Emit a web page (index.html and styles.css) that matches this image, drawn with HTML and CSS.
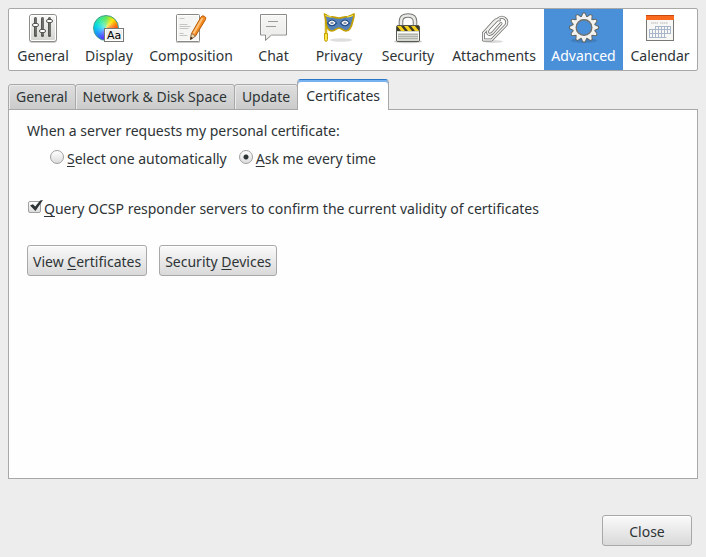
FILE: index.html
```html
<!DOCTYPE html>
<html lang="en">
<head>
    <meta charset="UTF-8">
    <meta name="viewport" content="width=device-width, initial-scale=1.0">
    <title>Preferences</title>
    <link rel="stylesheet" href="styles.css">
</head>
<body>
    <nav class="toolbar">
        <button type="button" class="category">
            <svg class="icon" viewBox="0 0 32 32" aria-hidden="true">
                <defs>
                    <linearGradient id="plate" x1="0" y1="0" x2="0" y2="1">
                        <stop offset="0" stop-color="#fafaf9"/>
                        <stop offset="1" stop-color="#d3d3d0"/>
                    </linearGradient>
                </defs>
                <rect x="2" y="3" width="28" height="28" rx="3" fill="#000" opacity=".2"/>
                <rect x="2.5" y="2.5" width="27" height="27" rx="2.5" fill="url(#plate)" stroke="#8b8d88"/>
                <rect x="3.5" y="3.5" width="25" height="25" rx="1.5" fill="none" stroke="#fff"/>
                <path d="M8.500 6.500v17M15.500 6.500v17M22.500 6.500v17" stroke="#555753" stroke-width="3" stroke-linecap="round"/>
                <path d="M9 6v17M16 6v17M23 6v17" stroke="#888a85" stroke-width="1"/>
                <rect x="5.500" y="11.500" width="6" height="3" rx="1.500" fill="#fff" stroke="#555753"/>
                <rect x="12.500" y="17.500" width="6" height="3" rx="1.500" fill="#fff" stroke="#555753"/>
                <rect x="19.500" y="7.500" width="6" height="3" rx="1.500" fill="#fff" stroke="#555753"/>
            </svg>
            <span>General</span>
        </button>
        <button type="button" class="category">
            <svg class="icon" viewBox="0 0 32 32" aria-hidden="true">
                <foreignObject x="0" y="3" width="26" height="26"><div class="color-wheel"></div></foreignObject>
                <rect x="11.500" y="16.500" width="19" height="13" fill="#eeeeec" stroke="#777975"/>
                <rect x="12.500" y="17.500" width="17" height="11" fill="none" stroke="#fff"/>
                <text class="icon-sample" x="14" y="27">Aa</text>
            </svg>
            <span>Display</span>
        </button>
        <button type="button" class="category">
            <svg class="icon" viewBox="0 0 32 32" aria-hidden="true">
                <rect x="1" y="3" width="24" height="28" rx="1" fill="#000" opacity=".2"/>
                <rect x="1.500" y="2.500" width="23" height="27" rx="1" fill="#f5f5f4" stroke="#888a85"/>
                <rect x="2.500" y="3.500" width="21" height="25" fill="none" stroke="#fff"/>
                <path d="M4.500 6.500h5M4.500 12.500h8M4.500 14.500h11M4.500 16.500h9M4.500 21.500h4M4.500 23.500h8" stroke="#c4c6c1"/>
                <path d="M15.500 27.500l1-6 9.500-16.500q1.500-2 3.500-.7t1 3.200L20.500 24z" fill="#f58a1f" stroke="#b75a05"/>
                <path d="M18.500 21.500L27.500 6" stroke="#fcc27a" stroke-width="2"/>
                <path d="M15.500 27.500l1-6 4 2.500z" fill="#f2dcae" stroke="#77604a" stroke-width=".7"/>
                <path d="M15.300 27.700l.5-3 2 1.300z" fill="#222"/>
            </svg>
            <span>Composition</span>
        </button>
        <button type="button" class="category">
            <svg class="icon" viewBox="0 0 32 32" aria-hidden="true">
                <path d="M2.500 2.500h26v20.500H13.500L7.500 28.500V23H2.500z" fill="url(#plate)" stroke="#8b8d88"/>
                <path d="M3.500 3.500h24v18.500H13L8.500 26V22h-5z" fill="#f6f6f5" stroke="#fff" opacity=".65"/>
                <path d="M10 9.500h10M8 14.500h10" stroke="#999b96"/>
            </svg>
            <span>Chat</span>
        </button>
        <button type="button" class="category">
            <svg class="icon" viewBox="0 0 32 32" aria-hidden="true">
                <ellipse cx="18" cy="28" rx="11" ry="1.800" fill="#000" opacity=".13"/>
                <path d="M3 2v20" stroke="#b89600" stroke-width="2.400"/>
                <path d="M3 2v20" stroke="#f5dc3c"/>
                <path d="M1.500 21.500h3v6q-.5 2-1.500 2t-1.500-2z" fill="#fce94f" stroke="#c4a000"/>
                <path d="M1.500 2q2 2 5 2.500c4 0 6.500 1.500 9.500 1.500s5-1.500 9-1.500q3-.5 6-2.500c.3 2-.4 4.500-1.200 7-1.200 5.500-3 10-6.800 10-3 0-4.500-3-7-3s-4 3-7 3c-4 0-6-5-6-9.500-.2-2.500-1-5-1.500-7.500z" fill="#5481b8" stroke="#c4a000" stroke-width="1.700" stroke-linejoin="round"/>
                <path d="M2.500 3.500q3 1.500 6 1.500M30 3.500q-3 1.500-6 1.500" stroke="#fce94f" fill="none"/>
                <path d="M4.500 11q4.500-6 9 0-4.500 5.500-9 0zM17.500 11q4.500-6 9 0-4.500 5.500-9 0z" fill="#fff" stroke="#204a87" stroke-width="1.200"/>
                <ellipse cx="9" cy="11" rx="1.700" ry="1.300" fill="#8b98ab"/>
                <ellipse cx="22" cy="11" rx="1.700" ry="1.300" fill="#8b98ab"/>
            </svg>
            <span>Privacy</span>
        </button>
        <button type="button" class="category">
            <svg class="icon" viewBox="0 0 32 32" aria-hidden="true">
                <ellipse cx="16" cy="29.500" rx="14" ry="1.800" fill="#000" opacity=".2"/>
                <path d="M9 15V9.500C9 5 11.500 3.500 16 3.500s7 1.500 7 6V15" fill="none" stroke="#777975" stroke-width="4.600"/>
                <path d="M9 15V9.500C9 5 11.500 3.500 16 3.500s7 1.500 7 6V15" fill="none" stroke="#e9e9e7" stroke-width="2.600"/>
                <rect x="4.500" y="13.500" width="23" height="16" rx="1.500" fill="#d3d7cf" stroke="#555753"/>
                <rect x="5" y="14" width="22" height="5" fill="#3c3a26"/>
                <path d="M5 14h4l4 5H9zM12 14h4l4 5h-4zM19 14h4l4 5h-4z" fill="#f4cf1b"/>
                <path d="M5 20.500h22" stroke="#fff"/>
                <path d="M6 22.500h20M6 24.500h20M6 26.500h20" stroke="#b0b2ad"/>
                <path d="M5.500 20v8.500M26.500 20v8.500" stroke="#f5f5f3"/>
            </svg>
            <span>Security</span>
        </button>
        <button type="button" class="category">
            <svg class="icon" viewBox="0 0 32 32" aria-hidden="true">
                <defs>
                    <path id="clip" d="M23 11.500L14.500 21q-3 2.500-4.500.5t1-5L20.500 6.500q3.500-2.500 6.500 0t1 6.500L13.500 28H5.500v-7L16 9.500q3-3 5.500-1.500"/>
                </defs>
                <ellipse cx="15" cy="29.500" rx="10" ry="1.500" fill="#000" opacity=".15"/>
                <g fill="none" stroke-linecap="round" stroke-linejoin="round">
                    <use href="#clip" stroke="#70726e" stroke-width="3"/>
                    <use href="#clip" stroke="#f0f0ee" stroke-width="1.400"/>
                </g>
            </svg>
            <span>Attachments</span>
        </button>
        <button type="button" class="category selected" aria-current="page">
            <svg class="icon" viewBox="0 0 32 32" aria-hidden="true">
                <defs>
                    <path id="tooth" d="M13 6.500L15.200 1.500h1.600l2.200 5z"/>
                    <g id="teeth">
                        <use href="#tooth"/>
                        <use href="#tooth" transform="rotate(30 16 15.500)"/>
                        <use href="#tooth" transform="rotate(60 16 15.500)"/>
                        <use href="#tooth" transform="rotate(90 16 15.500)"/>
                        <use href="#tooth" transform="rotate(120 16 15.500)"/>
                        <use href="#tooth" transform="rotate(150 16 15.500)"/>
                        <use href="#tooth" transform="rotate(180 16 15.500)"/>
                        <use href="#tooth" transform="rotate(210 16 15.500)"/>
                        <use href="#tooth" transform="rotate(240 16 15.500)"/>
                        <use href="#tooth" transform="rotate(270 16 15.500)"/>
                        <use href="#tooth" transform="rotate(300 16 15.500)"/>
                        <use href="#tooth" transform="rotate(330 16 15.500)"/>
                    </g>
                </defs>
                <ellipse cx="16" cy="28.500" rx="13" ry="2.500" fill="#000" opacity=".12"/>
                <use href="#teeth" fill="#eeeeec" stroke="#62645f" stroke-width="1.800"/>
                <use href="#teeth" fill="#f2f2f0"/>
                <circle cx="16" cy="15.500" r="9.300" fill="none" stroke="#f2f2f0" stroke-width="2.800"/>
                <circle cx="16" cy="15.500" r="7.800" fill="none" stroke="#70726e" stroke-width="1.400"/>
            </svg>
            <span>Advanced</span>
        </button>
        <button type="button" class="category">
            <svg class="icon" viewBox="0 0 32 32" aria-hidden="true">
                <rect x="2.500" y="3.500" width="27" height="25" fill="#f7f7f6" stroke="#777975"/>
                <rect x="2" y="3" width="28" height="5" fill="#f96a20"/>
                <path d="M2 3.500h28" stroke="#c64a0d"/>
                <path d="M7 11h7M16 11h8" stroke="#ccc" stroke-width="1.500" stroke-dasharray="1.500 .5"/>
                <path d="M11.500 14.500h15M5.500 17.500h21M5.500 21.500h21M5.500 25.500h17M5.500 17v9M8.500 17v9M11.500 14v12M14.500 14v12M17.500 14v12M20.500 14v12M23.500 14v8M26.500 14v8" fill="none" stroke="#a9b6ca"/>
            </svg>
            <span>Calendar</span>
        </button>
    </nav>

    <div class="tabs" role="tablist">
        <button type="button" class="tab" role="tab">General</button>
        <button type="button" class="tab" role="tab">Network &amp; Disk Space</button>
        <button type="button" class="tab" role="tab">Update</button>
        <button type="button" class="tab active" role="tab" aria-selected="true">Certificates</button>
    </div>

    <main class="panel" role="tabpanel">
        <p class="question" id="cert-question">When a server requests my personal certificate:</p>
        <div class="options" role="radiogroup" aria-labelledby="cert-question">
            <div class="option">
                <input type="radio" name="cert" id="cert-auto">
                <label for="cert-auto"><u>S</u>elect one automatically</label>
            </div>
            <div class="option">
                <input type="radio" name="cert" id="cert-ask" checked>
                <label for="cert-ask"><u>A</u>sk me every time</label>
            </div>
        </div>
        <div class="option ocsp">
            <input type="checkbox" id="ocsp" checked>
            <label for="ocsp"><u>Q</u>uery OCSP responder servers to confirm the current validity of certificates</label>
        </div>
        <div class="actions">
            <button type="button" class="button">View <u>C</u>ertificates</button>
            <button type="button" class="button">Security <u>D</u>evices</button>
        </div>
    </main>

    <footer class="footer">
        <button type="button" class="button close">Close</button>
    </footer>
</body>
</html>
```
FILE: styles.css
```css
* {
    box-sizing: border-box;
}
body {
    display: flex;
    flex-direction: column;
    min-height: 100vh;
    margin: 0;
    padding: 8px 8px 11px;
    background-color: #ededed;
    color: #2e3436;
    font-family: "Noto Sans", "Open Sans", sans-serif;
    font-size: 14px;
    line-height: 18px;
}
button {
    font: inherit;
    color: inherit;
    white-space: nowrap;
}
u {
    text-underline-offset: 2px;
    text-decoration-thickness: 1px;
    text-decoration-skip-ink: none;
}

/* category bar */
.toolbar {
    display: grid;
    grid-template-columns: 68fr 64fr 100fr 65fr 66fr 72fr 100fr 79fr 74fr;
    border: 1px solid #a8a8a8;
    border-radius: 2px;
    background-color: #fff;
}
.category {
    display: flex;
    flex-direction: column;
    align-items: center;
    gap: 3px;
    min-width: 0;
    padding: 3px 0 5px;
    border: 0;
    background: none;
}
.category.selected {
    background-color: #4a90d9;
    color: #fff;
}
.icon {
    width: 32px;
    height: 32px;
}
.icon-sample {
    font: 11px "DejaVu Sans", sans-serif;
}
.color-wheel {
    width: 26px;
    height: 26px;
    border: 1px solid #3c9a8a;
    border-radius: 50%;
    background: radial-gradient(circle, rgba(255, 255, 255, 0.5), transparent 60%),
        conic-gradient(#5ce65c, #ffe600 40deg, #ff7a00 75deg, #ff2a2a 110deg, #e020d0 150deg, #5a35ff 195deg, #1e90ff 235deg, #00d8e8 280deg, #2de8a0 320deg, #5ce65c);
}

/* tabs */
.tabs {
    display: flex;
    align-items: flex-end;
    margin: 8px 0 -1px;
}
.tab {
    height: 26px;
    margin-right: -1px;
    padding: 0 7px;
    border: 1px solid #a8a8a8;
    border-radius: 3px 3px 0 0;
    background: linear-gradient(#dedede, #cbcbcb);
    box-shadow: inset 1px 1px #ebebeb;
}
.tab.active {
    position: relative;
    height: 31px;
    padding: 2px 8px 0;
    border-top-color: #2a76c6;
    border-bottom: 0;
    border-radius: 4px 4px 0 0;
    background: #fff;
    box-shadow: inset 0 2px #76b2f0;
}
.panel {
    flex: 1;
    padding: 12px 18px;
    border: 1px solid #a8a8a8;
    background-color: #fefefe;
}

/* certificate settings */
.question {
    margin: 0;
}
.options {
    display: flex;
    gap: 12px;
    margin: 10px 0 0 23px;
}
.option {
    display: flex;
    align-items: flex-start;
    gap: 3px;
}
.option input {
    appearance: none;
    flex: none;
    margin: 0;
    border: 1px solid #a0a0a0;
    background: linear-gradient(#fff, #dcdcdc);
}
.option input[type="radio"] {
    width: 14px;
    height: 14px;
    border-radius: 50%;
}
.option input[type="radio"]:checked {
    background: radial-gradient(circle, #2e3436 2px, transparent 3px), linear-gradient(#fff, #dcdcdc);
}
.option input[type="checkbox"] {
    position: relative;
    width: 13px;
    height: 12px;
    margin: 1px 0 0 1px;
    border-radius: 2px;
}
.option input[type="checkbox"]:checked::after {
    content: "";
    position: absolute;
    left: 1px;
    top: -2px;
    width: 13px;
    height: 11px;
    background-color: #2e3436;
    clip-path: polygon(0 50%, 22% 38%, 40% 60%, 78% 5%, 100% 0, 42% 100%);
}
.ocsp {
    margin-top: 32px;
}
.actions {
    display: flex;
    gap: 12px;
    margin-top: 27px;
}
.button {
    height: 31px;
    padding: 2px 5px 0;
    border: 1px solid #a8a8a8;
    border-radius: 3px;
    background: linear-gradient(#fafafa, #d9d9d9);
    box-shadow: inset 0 1px #fff;
}
.footer {
    display: flex;
    justify-content: flex-end;
    padding: 36px 6px 0 0;
}
.close {
    min-width: 90px;
}
```
